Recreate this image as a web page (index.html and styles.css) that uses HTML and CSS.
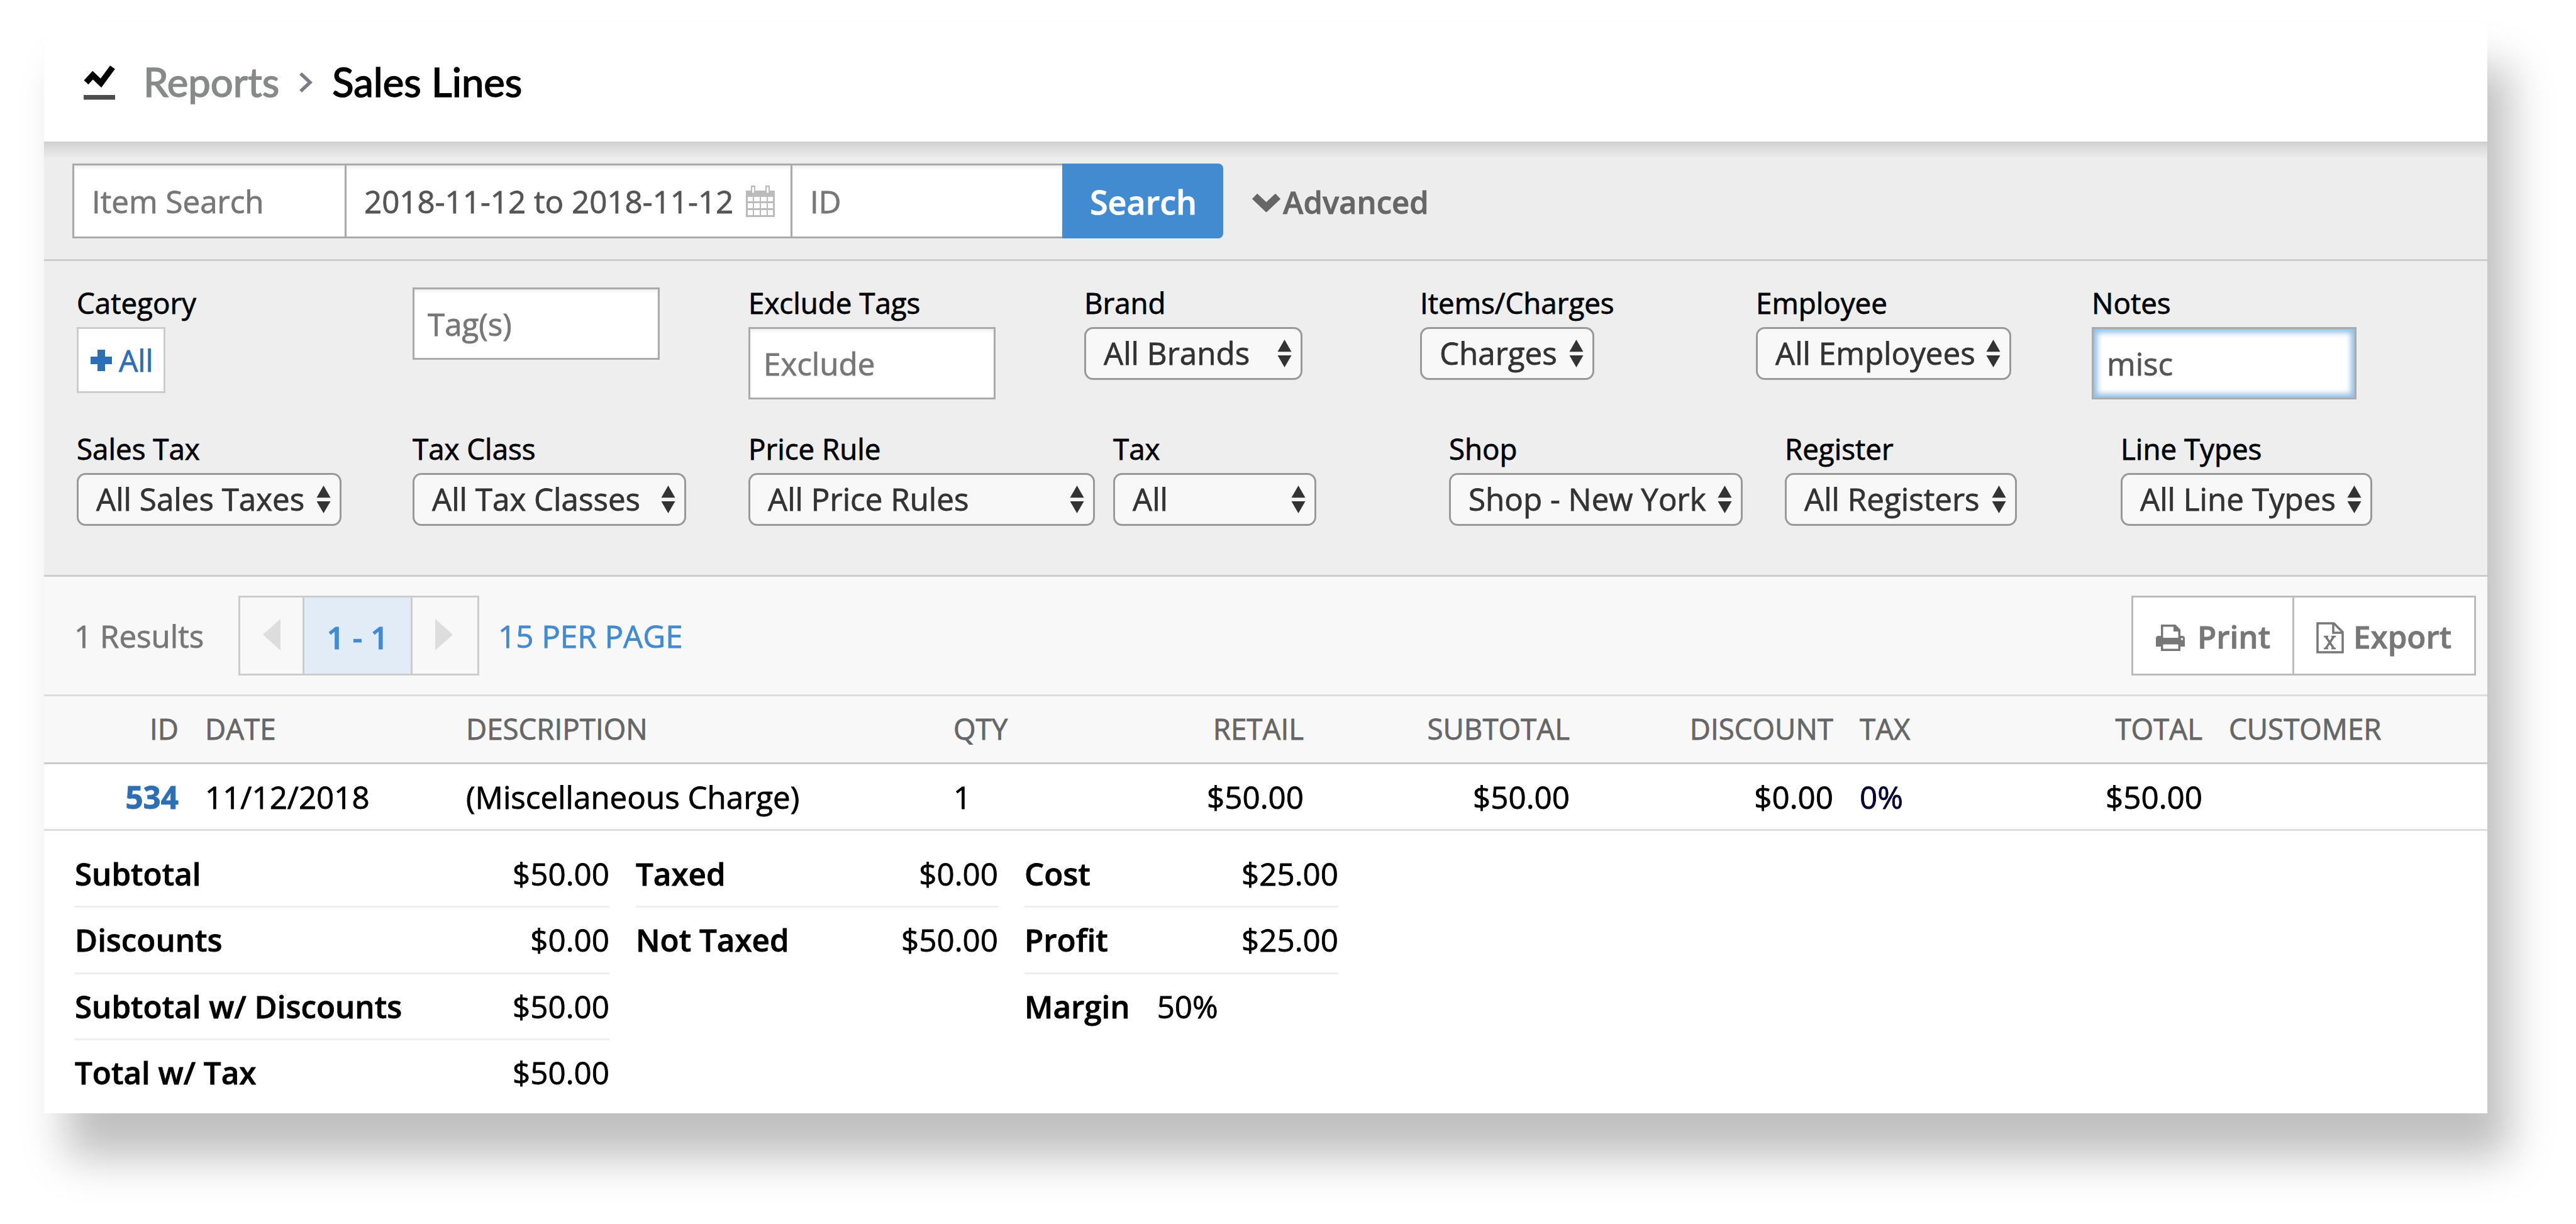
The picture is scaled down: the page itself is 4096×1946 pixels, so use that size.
FILE: index.html
```html
<!DOCTYPE html>
<html lang="en">
<head>
<meta charset="utf-8">
<title>Sales Lines</title>
<link rel="stylesheet" href="styles.css">
</head>
<body>
<svg width="0" height="0" class="defs">
  <symbol id="updown" viewBox="0 0 24 46"><path d="M12 0 23.500 20H.5zM12 46 .5 26h23z"/></symbol>
</svg>
<main class="panel">
  <header class="title-bar">
    <svg class="title-icon" viewBox="0 0 50 58"><path d="M4 30 14.500 18.500 27.500 31 46 6" fill="none" stroke="#000" stroke-width="9.500"/><path d="M0 50h50v7.500H0z" fill="#4d4d4d"/></svg>
    <span class="crumb">Reports</span>
    <svg class="crumb-arrow" viewBox="0 0 22 34"><path d="M3 3 18 17 3 31" fill="none" stroke="#7b7d85" stroke-width="5.500"/></svg>
    <span class="crumb current">Sales Lines</span>
  </header>

  <section class="search-bar">
    <div class="field item">Item Search</div>
    <div class="field dates"><span>2018-11-12 to 2018-11-12</span>
      <svg class="calendar" viewBox="0 0 46 50"><path d="M0 8h46v42H0z" fill="#bbb"/><path d="M8 0h7v13H8zM31 0h7v13h-7z" fill="#bbb"/><path d="M10 2.500h3v9h-3zM33 2.500h3v9h-3z" fill="#fff"/><path d="M3 18h8v7H3zM13 18h9v7h-9zM24 18h9v7h-9zM35 18h8v7h-8zM3 28h8v8H3zM13 28h9v8h-9zM24 28h9v8h-9zM35 28h8v8h-8zM3 39h8v8H3zM13 39h9v8h-9zM24 39h9v8h-9zM35 39h8v8h-8z" fill="#fff"/></svg>
    </div>
    <div class="field id">ID</div>
    <div class="search-button">Search</div>
    <div class="advanced"><svg viewBox="0 0 47 32"><path d="M5 7 23.500 24.500 42 7" fill="none" stroke="#666" stroke-width="12"/></svg>Advanced</div>
  </section>

  <section class="filters">
    <div class="filter-row first">
      <div class="filter"><label>Category</label><div class="add"><svg viewBox="0 0 36 36"><path d="M12 1h12v11h11v12H24v11H12V24H1V12h11z" fill="#2c6fb4"/></svg>All</div></div>
      <div class="filter"><div class="field tags">Tag(s)</div></div>
      <div class="filter"><label>Exclude Tags</label><div class="field exclude">Exclude</div></div>
      <div class="filter"><label>Brand</label><div class="select brand">All Brands<svg><use href="#updown"/></svg></div></div>
      <div class="filter"><label>Items/Charges</label><div class="select charges">Charges<svg><use href="#updown"/></svg></div></div>
      <div class="filter"><label>Employee</label><div class="select employee">All Employees<svg><use href="#updown"/></svg></div></div>
      <div class="filter"><label>Notes</label><div class="field notes">misc</div></div>
    </div>
    <div class="filter-row second">
      <div class="filter"><label>Sales Tax</label><div class="select sales-tax">All Sales Taxes<svg><use href="#updown"/></svg></div></div>
      <div class="filter"><label>Tax Class</label><div class="select tax-class">All Tax Classes<svg><use href="#updown"/></svg></div></div>
      <div class="filter"><label>Price Rule</label><div class="select price-rule">All Price Rules<svg><use href="#updown"/></svg></div></div>
      <div class="filter"><label>Tax</label><div class="select tax">All<svg><use href="#updown"/></svg></div></div>
      <div class="filter"><label>Shop</label><div class="select shop">Shop - New York<svg><use href="#updown"/></svg></div></div>
      <div class="filter"><label>Register</label><div class="select register">All Registers<svg><use href="#updown"/></svg></div></div>
      <div class="filter"><label>Line Types</label><div class="select line-types">All Line Types<svg><use href="#updown"/></svg></div></div>
    </div>
  </section>

  <section class="toolbar">
    <span class="results">1 Results</span>
    <div class="pager">
      <div class="step"><svg viewBox="0 0 28 50"><path d="M28 0v50L0 25z" fill="#ddd"/></svg></div>
      <div class="page">1 - 1</div>
      <div class="step next"><svg viewBox="0 0 28 50"><path d="M0 0v50l28-25z" fill="#ddd"/></svg></div>
    </div>
    <span class="per-page">15 PER PAGE</span>
    <div class="actions">
      <div class="action print">
        <svg viewBox="0 0 46 42"><path d="M8 0h23l8 8v14H8z" fill="#777"/><path d="M11.500 3.500H28V11h7.500v10h-24z" fill="#fff"/><path d="M4 18h4v3.500h31V18h3q4 0 4 4v13h-7v7H8v-7H0V22q0-4 4-4z" fill="#777"/><path d="M11.500 31.500h24v7h-24z" fill="#fff"/><circle cx="41.500" cy="23" r="1.800" fill="#fff"/></svg>Print</div>
      <div class="action export">
        <svg viewBox="0 0 44 50"><path d="M2 2h26l14 14v32H2z" fill="#fff" stroke="#777" stroke-width="3.500"/><path d="M27 2v15h15" fill="none" stroke="#777" stroke-width="3.500"/><path d="m15 23 13 19M28 23 15 42" fill="none" stroke="#777" stroke-width="3.500"/><path d="M12 23h7M24 23h7M12 42h7M24 42h7" stroke="#777" stroke-width="2.500"/></svg>Export</div>
    </div>
  </section>

  <table class="lines">
    <colgroup><col class="c-id"><col class="c-date"><col class="c-desc"><col class="c-qty"><col class="c-retail"><col class="c-sub"><col class="c-disc"><col class="c-tax"><col class="c-total"><col></colgroup>
    <thead><tr><th class="num">ID</th><th>DATE</th><th>DESCRIPTION</th><th>QTY</th><th class="num">RETAIL</th><th class="num">SUBTOTAL</th><th class="num">DISCOUNT</th><th>TAX</th><th class="num">TOTAL</th><th>CUSTOMER</th></tr></thead>
    <tbody><tr><td class="num link">534</td><td>11/12/2018</td><td>(Miscellaneous Charge)</td><td>1</td><td class="num">$50.00</td><td class="num">$50.00</td><td class="num">$0.00</td><td class="rate">0%</td><td class="num">$50.00</td><td></td></tr></tbody>
  </table>

  <section class="totals">
    <dl class="sums">
      <div><dt>Subtotal</dt><dd>$50.00</dd></div>
      <div><dt>Discounts</dt><dd>$0.00</dd></div>
      <div><dt>Subtotal w/ Discounts</dt><dd>$50.00</dd></div>
      <div><dt>Total w/ Tax</dt><dd>$50.00</dd></div>
    </dl>
    <dl class="taxes">
      <div><dt>Taxed</dt><dd>$0.00</dd></div>
      <div><dt>Not Taxed</dt><dd>$50.00</dd></div>
    </dl>
    <dl class="profit">
      <div><dt>Cost</dt><dd>$25.00</dd></div>
      <div><dt>Profit</dt><dd>$25.00</dd></div>
      <div class="margin"><dt>Margin</dt><dd>50%</dd></div>
    </dl>
  </section>
</main>
</body>
</html>
```
FILE: styles.css
```css
* { box-sizing: border-box; }
body {
  margin: 0;
  padding: 35px 0 0 70px;
  height: 1946px;
  overflow: hidden;
  background: #fff;
  font: 49.3px/60px "Open Sans", sans-serif;
  color: #000;
  -webkit-text-stroke: .8px currentColor;
}
.defs { display: block; height: 0; }
svg { flex: none; }
.panel {
  width: 3885px;
  height: 1735px;
  background: #fff;
  box-shadow: 35px 70px 64px rgba(0, 0, 0, .25);
}

.title-bar {
  height: 190px;
  padding: 0 0 0 63px;
  display: flex;
  align-items: center;
  font: 63.5px/76px Lato, sans-serif;
  -webkit-text-stroke: 1.5px currentColor;
}
.title-icon { width: 50px; height: 58px; margin-right: 45px; }
.crumb { color: #868a88; }
.crumb.current { color: #000; }
.crumb-arrow { width: 22px; height: 34px; margin: 2px 31px 0 31px; }

.search-bar {
  height: 190px;
  padding: 35px 45px 0;
  display: flex;
  align-items: flex-start;
  background: linear-gradient(#cfcfcf, #dedede 12px, #ededed 28px);
  border-bottom: 3px solid #ccc;
}
.field {
  display: flex;
  align-items: center;
  height: 115px;
  padding: 0 0 0 21px;
  color: #777;
  background: #fff;
  border: 3px solid #aaa;
  box-shadow: inset 0 4px 4px rgba(0, 0, 0, .06);
}
.search-bar .field { height: 119px; padding: 1px 0 0 28px; }
.search-bar .item { width: 433px; border-right: 0; }
.search-bar .dates { width: 709px; color: #555; border-right: 0; }
.search-bar .id { width: 432px; border-right: 0; }
.calendar { width: 46px; height: 50px; margin-left: 20px; }
.search-button {
  width: 256px;
  height: 119px;
  padding: 1px 0 0 2px;
  border-radius: 0 8px 8px 0;
  background: #428bd0;
  color: #fff;
  font-weight: 600;
  font-size: 52px;
  line-height: 119px;
  text-align: center;
}
.advanced {
  display: flex;
  align-items: center;
  height: 119px;
  padding-top: 2px;
  margin-left: 45px;
  color: #666;
  font-weight: 600;
  font-size: 49px;
}
.advanced svg { width: 47px; height: 32px; margin-right: 3px; }

.filters {
  height: 502px;
  padding-left: 52px;
  background: #eee;
  border-bottom: 3px solid #ccc;
}
.filter-row { display: grid; align-items: start; }
.filter-row.first {
  grid-template-columns: repeat(7, 534px);
  height: 232px;
  padding-top: 42px;
}
.filter-row.second {
  grid-template-columns: 534px 534px 580px 534px 534px 534px 500px;
  padding-top: 42px;
}
.filter label { display: block; height: 63px; font-size: 45.7px; line-height: 49px; }
.add {
  display: flex;
  align-items: center;
  width: 141px;
  height: 105px;
  padding-left: 18px;
  border: 3px solid #ccc;
  background: #fff;
  color: #2c6fb4;
  font-size: 48px;
}
.add svg { width: 36px; height: 36px; margin-right: 10px; }
.tags, .exclude { width: 393px; }
.notes {
  width: 421px;
  color: #555;
  box-shadow: inset 0 0 9px 6px #94c0e8;
}
.select {
  display: flex;
  align-items: center;
  justify-content: space-between;
  height: 84px;
  padding: 0 14px 2px 28px;
  border: 3px solid #999;
  border-radius: 14px;
  background: #f8f8f8;
  color: #333;
  white-space: nowrap;
}
.select svg { width: 23px; height: 46px; margin-top: 2px; fill: #333; }
.brand { width: 347px; }
.charges { width: 277px; }
.employee { width: 406px; }
.sales-tax { width: 421px; }
.tax-class { width: 435px; }
.price-rule { width: 551px; }
.tax { width: 323px; }
.shop { width: 467px; }
.register { width: 369px; }
.line-types { width: 400px; }

.toolbar {
  display: flex;
  align-items: center;
  height: 190px;
  padding: 0 18px 0 48px;
  background: #f8f8f8;
  border-bottom: 3px solid #ddd;
}
.results { width: 261px; color: #777; }
.pager { display: flex; height: 127px; border: 3px solid #ccc; }
.step { display: flex; align-items: center; width: 99px; padding: 0 0 4px 36px; }
.step.next { padding-left: 36px; width: 103px; }
.step svg { width: 28px; height: 50px; }
.page {
  width: 175px;
  line-height: 126px;
  height: 121px;
  text-align: center;
  color: #428bd0;
  font-weight: 600;
  background: #e1ecf7;
  border: solid #ccc;
  border-width: 0 3px;
}
.per-page { margin-left: 30px; color: #428bd0; }
.actions { display: flex; margin-left: auto; height: 127px; border: 3px solid #bbb; background: #fff; }
.action { display: flex; align-items: center; padding-top: 3px; color: #777; font-weight: 600; }
.print { width: 256px; padding-left: 36px; border-right: 3px solid #bbb; }
.export { width: 286px; padding-left: 35px; }
.print svg { width: 46px; height: 42px; margin: 3px 20px 0 0; }
.export svg { width: 44px; height: 50px; margin: 3px 15px 0 0; }

.lines { width: 100%; table-layout: fixed; border-collapse: separate; border-spacing: 0; }
.lines th, .lines td { padding: 0 20px 0 22px; text-align: left; white-space: nowrap; }
.lines th {
  height: 108px;
  padding-bottom: 3px;
  background: #f8f8f8;
  border-bottom: 3px solid #ccc;
  font-size: 45.7px;
  font-weight: 400;
  color: #666;
}
.lines td { height: 106px; border-bottom: 3px solid #ddd; }
.lines .num { text-align: right; }
.lines .link { color: #2c6fb4; font-weight: 700; }
.lines .rate { color: #003; }
.c-id { width: 234px; }
.c-date { width: 415px; }
.c-desc { width: 775px; }
.c-qty { width: 187px; }
.c-retail { width: 412px; }
.c-sub { width: 423px; }
.c-disc { width: 419px; }
.c-tax { width: 194px; }
.c-total { width: 393px; }

.totals { display: flex; align-items: flex-start; padding: 17px 0 0 49px; gap: 42px; }
dl { margin: 0; }
dl div { display: flex; justify-content: space-between; height: 105.3px; line-height: 102px; border-bottom: 3px solid #eee; }
dl div:last-child { border-bottom: 0; }
dt { font-weight: 600; }
dd { margin: 0; }
.sums { width: 850px; }
.taxes { width: 576px; }
.profit { width: 499px; }
dl .margin { justify-content: flex-start; gap: 43px; }
```
